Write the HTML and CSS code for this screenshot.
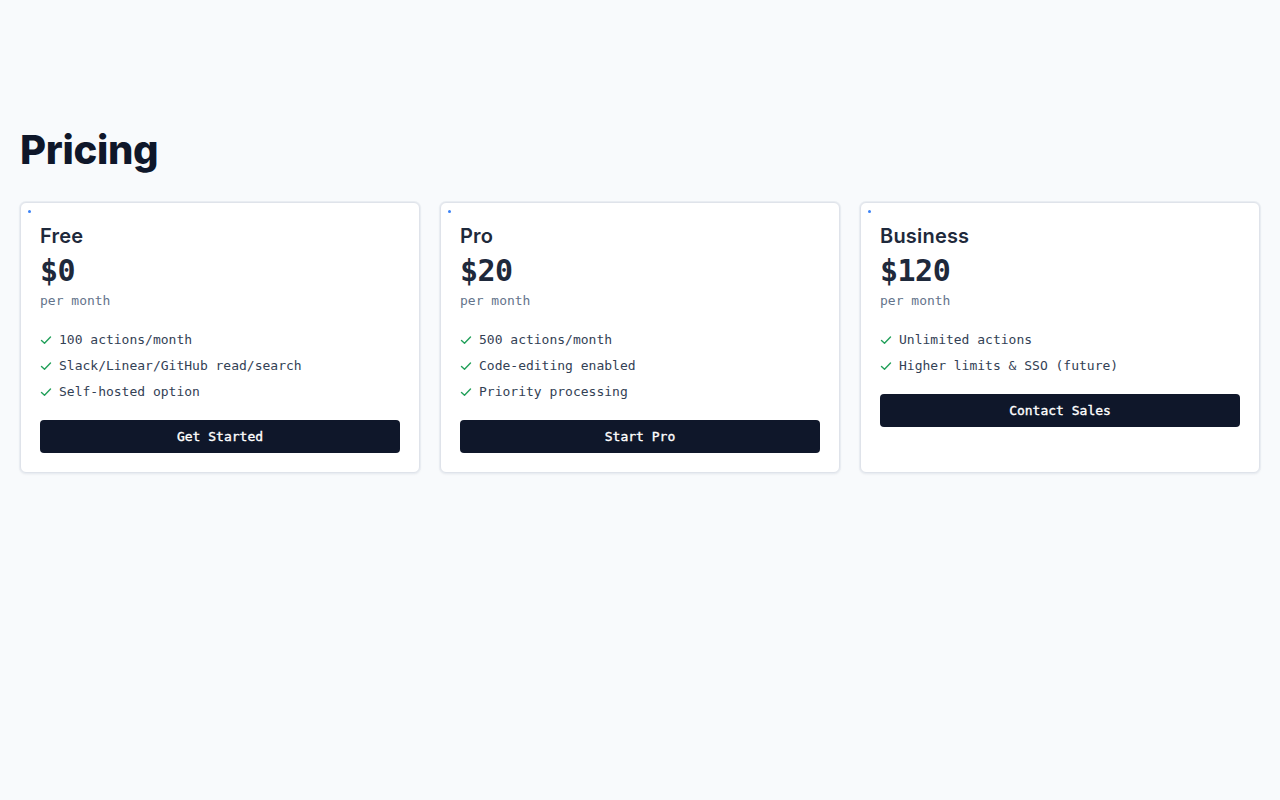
FILE: index.html
```html
<!DOCTYPE html>
<html lang="en">
<head>
<meta charset="utf-8">
<title>Pricing</title>
<link rel="stylesheet" href="styles.css">
</head>
<body>
<main class="page">
  <h1 class="page-title">Pricing</h1>
  <div class="plans">
    <section class="plan">
      <span class="plan-dot"></span>
      <h2 class="plan-name">Free</h2>
      <div class="plan-price">$0</div>
      <div class="plan-period">per month</div>
      <ul class="features">
        <li><svg class="check" viewBox="0 0 12 12"><path d="M1.5 6.5 4.5 9.2 10.5 3"/></svg>100 actions/month</li>
        <li><svg class="check" viewBox="0 0 12 12"><path d="M1.5 6.5 4.5 9.2 10.5 3"/></svg>Slack/Linear/GitHub read/search</li>
        <li><svg class="check" viewBox="0 0 12 12"><path d="M1.5 6.5 4.5 9.2 10.5 3"/></svg>Self-hosted option</li>
      </ul>
      <button class="plan-btn">Get Started</button>
    </section>
    <section class="plan">
      <span class="plan-dot"></span>
      <h2 class="plan-name">Pro</h2>
      <div class="plan-price">$20</div>
      <div class="plan-period">per month</div>
      <ul class="features">
        <li><svg class="check" viewBox="0 0 12 12"><path d="M1.5 6.5 4.5 9.2 10.5 3"/></svg>500 actions/month</li>
        <li><svg class="check" viewBox="0 0 12 12"><path d="M1.5 6.5 4.5 9.2 10.5 3"/></svg>Code-editing enabled</li>
        <li><svg class="check" viewBox="0 0 12 12"><path d="M1.5 6.5 4.5 9.2 10.5 3"/></svg>Priority processing</li>
      </ul>
      <button class="plan-btn">Start Pro</button>
    </section>
    <section class="plan">
      <span class="plan-dot"></span>
      <h2 class="plan-name">Business</h2>
      <div class="plan-price">$120</div>
      <div class="plan-period">per month</div>
      <ul class="features">
        <li><svg class="check" viewBox="0 0 12 12"><path d="M1.5 6.5 4.5 9.2 10.5 3"/></svg>Unlimited actions</li>
        <li><svg class="check" viewBox="0 0 12 12"><path d="M1.5 6.5 4.5 9.2 10.5 3"/></svg>Higher limits &amp; SSO (future)</li>
      </ul>
      <button class="plan-btn">Contact Sales</button>
    </section>
  </div>
</main>
</body>
</html>
```

FILE: styles.css
```css
* { box-sizing: border-box; }
html, body { margin: 0; padding: 0; }
body {
  background: #f8fafc;
  font-family: "DejaVu Sans Mono", "Liberation Mono", monospace;
  color: #1e293b;
}
.page {
  padding: 126px 20px 40px;
}
.page-title {
  margin: 0 0 28px;
  font-family: Inter, "Open Sans", sans-serif;
  font-weight: 800;
  font-size: 40px;
  line-height: 48px;
  letter-spacing: -0.3px;
  color: #0f172a;
}
.plans {
  display: grid;
  grid-template-columns: repeat(3, 1fr);
  gap: 20px;
}
.plan {
  position: relative;
  display: flex;
  flex-direction: column;
  align-items: stretch;
  background: #fff;
  border: 1px solid #dfe3ea;
  box-shadow: 0 0 0 1px #e9edf2, 0 1px 3px rgba(15, 23, 42, 0.08);
  border-radius: 6px;
  padding: 21px 19px 19px;
}
.plan-dot {
  position: absolute;
  top: 7px;
  left: 7px;
  width: 3px;
  height: 3px;
  border-radius: 50%;
  background: #3b82f6;
}
.plan-name {
  margin: 0;
  font-family: Inter, "Open Sans", sans-serif;
  font-weight: 600;
  font-size: 20px;
  line-height: 24px;
  color: #1e293b;
  letter-spacing: 0.2px;
}
.plan-price {
  margin-top: 5px;
  font-size: 30px;
  line-height: 36px;
  font-weight: 700;
  color: #1e293b;
  letter-spacing: -0.5px;
}
.plan-period {
  margin-top: 2px;
  font-size: 13px;
  line-height: 20px;
  color: #64748b;
}
.features {
  list-style: none;
  margin: 19px 0 0;
  padding: 0;
  display: flex;
  flex-direction: column;
  gap: 6px;
}
.features li {
  display: flex;
  align-items: center;
  gap: 7px;
  font-size: 13px;
  line-height: 20px;
  color: #334155;
}
.check {
  width: 12px;
  height: 12px;
  flex: none;
  fill: none;
  stroke: #22a05a;
  stroke-width: 1.4;
  stroke-linecap: round;
  stroke-linejoin: round;
}
.plan-btn {
  margin-top: 18px;
  height: 33px;
  border: none;
  border-radius: 4px;
  background: #0f172a;
  color: #fff;
  font-family: "DejaVu Sans Mono", "Liberation Mono", monospace;
  font-size: 13px;
  font-weight: 400;
  -webkit-text-stroke: 0.35px #fff;
  cursor: pointer;
}
```
